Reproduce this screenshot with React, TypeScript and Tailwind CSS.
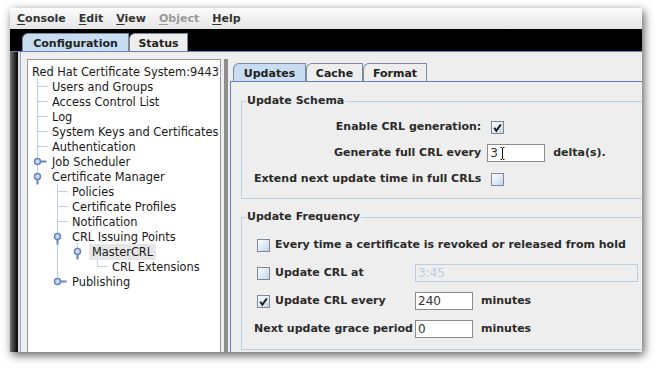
import React from 'react';

const Check: React.FC<{ checked?: boolean; className?: string }> = ({ checked, className = '' }) => (
    <span className={`inline-flex w-[13px] h-[13px] shrink-0 border border-[#7a8a99] bg-linear-to-br from-[#ffffff] to-[#c4d5e8] items-center justify-center ${className}`}>
        {checked && (
            <svg width="11" height="11" viewBox="0 0 11 11">
                <path d="M2.3 5.8 L4.3 8.8 L8.8 2.5" fill="none" stroke="#1e1e1e" strokeWidth="2" strokeLinejoin="miter" />
            </svg>
        )}
    </span>
);

const Field: React.FC<{ value: string; w: string; cursor?: boolean; disabled?: boolean }> = ({ value, w, cursor, disabled }) => (
    <div
        className={`relative h-[18px] ${w} shrink-0 border text-[12px] leading-[16px] pl-[2px] font-normal ${
            disabled ? 'bg-[#eeeeee] border-[#b8cfe5] text-[#b8cfe5]' : 'bg-white border-[#8c8c8c] text-[#333333]'
        }`}
    >
        {value}
        {cursor && (
            <svg className="absolute left-[12px] top-[2px]" width="5" height="13" viewBox="0 0 5 13">
                <path d="M0.5 0.5 H2 M3 0.5 H4.5 M2.5 1 V12 M0.5 12.5 H2 M3 12.5 H4.5" stroke="#111" strokeWidth="1" fill="none" />
            </svg>
        )}
    </div>
);

type Row = { label: string; level: number; sel?: boolean };

const rows: Row[] = [
    { label: 'Red Hat Certificate System:9443', level: 0 },
    { label: 'Users and Groups', level: 1 },
    { label: 'Access Control List', level: 1 },
    { label: 'Log', level: 1 },
    { label: 'System Keys and Certificates', level: 1 },
    { label: 'Authentication', level: 1 },
    { label: 'Job Scheduler', level: 1 },
    { label: 'Certificate Manager', level: 1 },
    { label: 'Policies', level: 2 },
    { label: 'Certificate Profiles', level: 2 },
    { label: 'Notification', level: 2 },
    { label: 'CRL Issuing Points', level: 2 },
    { label: 'MasterCRL', level: 3, sel: true },
    { label: 'CRL Extensions', level: 4 },
    { label: 'Publishing', level: 2 },
];

const indent = ['pl-[4px]', 'pl-[24px]', 'pl-[44px]', 'pl-[61px]', 'pl-[84px]'];

const cy = (i: number) => 11.5 + 15 * i;

const TreeLines: React.FC = () => {
    const line = '#b8cfe5';
    const knob = '#6382bf';
    const conn = (x: number, i: number) => <line key={`c${x}-${i}`} x1={x} y1={cy(i)} x2={x + 10} y2={cy(i)} stroke={line} />;
    const closed = (x: number, i: number) => (
        <g key={`k${x}-${i}`}>
            <line x1={x} y1={cy(i)} x2={x + 9} y2={cy(i)} stroke={knob} strokeWidth="2" />
            <circle cx={x} cy={cy(i)} r="3" fill="#c8ddf2" stroke={knob} strokeWidth="1.5" />
        </g>
    );
    const open = (x: number, i: number) => (
        <g key={`o${x}-${i}`}>
            <line x1={x} y1={cy(i)} x2={x} y2={cy(i) + 8} stroke={knob} strokeWidth="2" />
            <circle cx={x} cy={cy(i)} r="3" fill="#c8ddf2" stroke={knob} strokeWidth="1.5" />
        </g>
    );
    return (
        <svg className="absolute left-0 top-0" width="192" height="240">
            <line x1="9.5" y1="18.5" x2="9.5" y2={cy(7)} stroke={line} />
            {[1, 2, 3, 4, 5].map((i) => conn(9.5, i))}
            <line x1="29.5" y1={cy(7) + 7} x2="29.5" y2={cy(14)} stroke={line} />
            {[8, 9, 10].map((i) => conn(29.5, i))}
            <line x1="49.5" y1={cy(11) + 7} x2="49.5" y2={cy(12)} stroke={line} />
            <line x1="69.5" y1={cy(12) + 7} x2="69.5" y2={cy(13)} stroke={line} />
            {conn(69.5, 13)}
            {closed(9.5, 6)}
            {open(9.5, 7)}
            {open(29.5, 11)}
            {open(49.5, 12)}
            {closed(29.5, 14)}
        </svg>
    );
};

const Tab: React.FC<{ label: string; w: string; active?: boolean }> = ({ label, w, active }) => (
    <div
        className={`h-[18px] ${w} flex items-center justify-center pt-[3px] border border-b-0 border-[#7a8a99] rounded-tl-[6px] text-[11px] font-bold text-[#222] ${
            active ? 'bg-[#c8ddf2]' : 'bg-[#eeeeee]'
        }`}
    >
        {label}
    </div>
);

const App: React.FC = () => {
    return (
        <div className="w-[668px] h-[380px] bg-white pl-[10px] pt-[8px] font-['DejaVu_Sans',sans-serif] text-[#222]">
            <div className="w-[632px] h-[344px] flex flex-col overflow-hidden bg-black shadow-[2px_3px_9px_rgba(0,0,0,0.65)]">
                {/* menu bar */}
                <div className="h-[21px] shrink-0 flex items-center pl-[1px] bg-linear-to-b from-[#fbfbfb] to-[#e6e6e6] text-[11px] font-bold text-[#333]">
                    {['Console', 'Edit', 'View', 'Object', 'Help'].map((m) => (
                        <span key={m} className={`px-[6px] mr-[1px] pt-[1px] ${m === 'Object' ? 'text-[#9a9a9a]' : ''}`}>
                            <span className="underline underline-offset-2">{m[0]}</span>
                            {m.slice(1)}
                        </span>
                    ))}
                </div>

                {/* outer tabs */}
                <div className="h-[23px] shrink-0 flex items-end pl-[12px] bg-black border-b border-[#6382bf]">
                    <Tab label="Configuration" w="w-[107px]" active />
                    <Tab label="Status" w="w-[59px]" />
                </div>

                <div className="flex-1 flex min-h-0">
                    <div className="w-[8px] shrink-0 bg-linear-to-r from-[#777] to-[#050505]" />
                    <div className="flex-1 flex min-w-0 border-l-2 border-[#dcdcdc] bg-[#eeeeee]">
                        <div className="flex-1 flex min-w-0 border-l border-[#8da6d4] pl-[6px] pt-[7px]">
                            {/* tree */}
                            <div className="relative w-[194px] shrink-0 bg-white border border-b-0 border-[#9a9a9a] text-[11.4px] text-[#1a1a1a]">
                                <TreeLines />
                                <div className="relative pt-[5px]">
                                    {rows.map((r) => (
                                        <div key={r.label} className={`h-[15px] leading-[15px] whitespace-nowrap ${indent[r.level]}`}>
                                            {r.sel ? <span className="bg-[#e6e6e6] px-[3px] py-[1px]">{r.label}</span> : r.label}
                                        </div>
                                    ))}
                                </div>
                            </div>

                            {/* splitter */}
                            <div className="w-[9px] shrink-0 flex justify-center">
                                <div className="w-[4px] bg-[radial-gradient(circle,#8c8c8c_0.7px,transparent_1px)] bg-size-[2px_2px]" />
                            </div>

                            {/* right panel */}
                            <div className="flex-1 flex flex-col pt-[4px] min-w-0 overflow-hidden">
                                <div className="flex pl-[3px] h-[18px] shrink-0">
                                    <Tab label="Updates" w="w-[73px]" active />
                                    <Tab label="Cache" w="w-[57px]" />
                                    <Tab label="Format" w="w-[64px]" />
                                </div>
                                <div className="flex-1 w-[520px] border-l border-t border-[#6382bf] pl-[10px] pt-[12px] text-[11px] font-bold text-[#2a2a2a]">
                                    <div className="w-[460px]">
                                        <div className="relative border border-[#b8cfe5] mt-[7px]">
                                            <div className="absolute left-[4px] top-[-8px] px-[1px] leading-[14px] bg-[#eeeeee]">Update Schema</div>
                                            <div className="grid grid-cols-[auto_auto] items-center gap-x-[6px] gap-y-[8px] pt-[16px] pb-[10px] pl-[12px] w-max">
                                                <div className="h-[18px] flex items-center justify-end">Enable CRL generation:</div>
                                                <div className="h-[18px] flex items-center">
                                                    <Check checked className="ml-[4px]" />
                                                </div>
                                                <div className="h-[18px] flex items-center justify-end">Generate full CRL every</div>
                                                <div className="h-[18px] flex items-center gap-[8px]">
                                                    <Field value="3" w="w-[58px]" cursor />
                                                    <span>delta(s).</span>
                                                </div>
                                                <div className="h-[18px] flex items-center justify-end">Extend next update time in full CRLs</div>
                                                <div className="h-[18px] flex items-center">
                                                    <Check className="ml-[4px]" />
                                                </div>
                                            </div>
                                        </div>

                                        <div className="relative border border-[#b8cfe5] mt-[18px]">
                                            <div className="absolute left-[4px] top-[-8px] px-[1px] leading-[14px] bg-[#eeeeee]">Update Frequency</div>
                                            <div className="grid grid-cols-[155px_auto] items-center gap-x-[6px] gap-y-[10px] pt-[18px] pb-[11px] pl-[12px]">
                                                <div className="col-span-2 h-[18px] flex items-center gap-[5px] pl-[3px]">
                                                    <Check />
                                                    <span>Every time a certificate is revoked or released from hold</span>
                                                </div>
                                                <div className="h-[18px] flex items-center gap-[5px] pl-[3px]">
                                                    <Check />
                                                    <span>Update CRL at</span>
                                                </div>
                                                <div>
                                                    <Field value="3:45" w="w-[223px]" disabled />
                                                </div>
                                                <div className="h-[18px] flex items-center gap-[5px] pl-[3px]">
                                                    <Check checked />
                                                    <span>Update CRL every</span>
                                                </div>
                                                <div className="flex items-center gap-[8px]">
                                                    <Field value="240" w="w-[58px]" />
                                                    <span>minutes</span>
                                                </div>
                                                <div className="h-[18px] flex items-center whitespace-nowrap">Next update grace period</div>
                                                <div className="flex items-center gap-[8px]">
                                                    <Field value="0" w="w-[58px]" />
                                                    <span>minutes</span>
                                                </div>
                                            </div>
                                        </div>
                                    </div>
                                </div>
                            </div>
                        </div>
                    </div>
                </div>
            </div>
        </div>
    );
};

export default App;
